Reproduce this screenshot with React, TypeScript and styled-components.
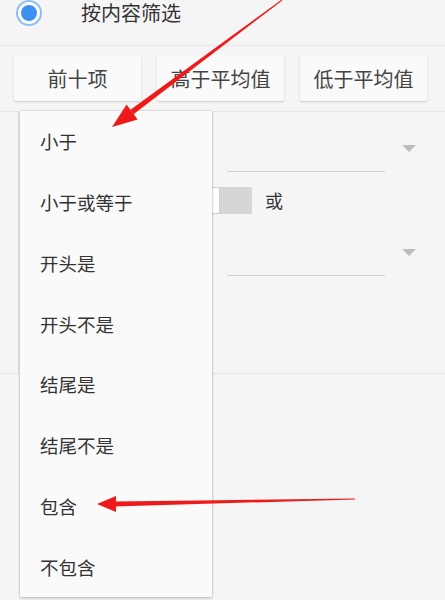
import styled, { createGlobalStyle } from 'styled-components'

const GlobalStyle = createGlobalStyle`
    html, body {
        margin: 0;
        padding: 0;
        background: #f5f5f5;
    }
    body {
        font-family: 'Noto Sans CJK SC', 'Noto Sans', sans-serif;
        color: #333;
    }
`

const menuItems = ['小于', '小于或等于', '开头是', '开头不是', '结尾是', '结尾不是', '包含', '不包含']

export default function App() {
    return (
        <Page>
            <GlobalStyle />
            <RadioRow>
                <Radio />
                <RadioLabel>按内容筛选</RadioLabel>
            </RadioRow>

            <ButtonRow>
                <QuickButton>前十项</QuickButton>
                <QuickButton>高于平均值</QuickButton>
                <QuickButton>低于平均值</QuickButton>
            </ButtonRow>

            <ConditionArea>
                <ConditionPanel>
                    <SelectRow>
                        <SelectField>
                            <Caret />
                        </SelectField>
                    </SelectRow>
                    <LogicRow>
                        <Switch>
                            <Knob />
                        </Switch>
                        <LogicLabel>或</LogicLabel>
                    </LogicRow>
                    <SelectRow>
                        <SelectField>
                            <Caret />
                        </SelectField>
                    </SelectRow>
                </ConditionPanel>

                {/* open dropdown menu, lies over the panel */}
                <Menu>
                    {menuItems.map(item => (
                        <MenuItem key={item}>{item}</MenuItem>
                    ))}
                </Menu>
            </ConditionArea>

            {/* red annotation arrows */}
            <Arrows width="445" height="600" viewBox="0 0 445 600">
                <polygon points="281.7,-0.4 282.3,0.4 133.5,114.2 130.5,109.8" fill="#ee1a1a" />
                <polygon points="112,127 126.6,104.6 137.6,119.4" fill="#ee1a1a" />
                <polygon points="355,498.6 355,499.4 114,506.5 114,501.5" fill="#ee1a1a" />
                <polygon points="97,504 116,496 116,512" fill="#ee1a1a" />
            </Arrows>
        </Page>
    )
}

/* ===========================
   styled-components
   =========================== */

const Page = styled.div`
    position: relative;
    width: 445px;
    height: 600px;
    overflow: hidden;
    background: #f5f5f5;
`

const RadioRow = styled.div`
    display: flex;
    align-items: flex-start;
    height: 45px;
    padding-left: 18px;
    border-bottom: 1px solid #e6e6e6;
    box-sizing: content-box;
`

const Radio = styled.span`
    flex: none;
    width: 16px;
    height: 16px;
    margin-top: 2px;
    border-radius: 50%;
    background: #3d8ff0;
    border: 3px solid #ffffff;
    box-shadow: 0 0 0 2px #8dbdf3;
`

const RadioLabel = styled.span`
    margin-left: 41px;
    margin-top: 3px;
    font-size: 20px;
    line-height: 20px;
    color: #333;
`

const ButtonRow = styled.div`
    display: flex;
    gap: 16px;
    padding: 9px 14px 10px;
    border-bottom: 1px solid #e6e6e6;
`

const QuickButton = styled.div`
    width: 127px;
    height: 46px;
    display: flex;
    align-items: center;
    justify-content: center;
    background: #fafafa;
    border-radius: 2px;
    box-shadow: 0 1px 2px rgba(0, 0, 0, 0.18);
    font-size: 20px;
    color: #444;
`

const ConditionArea = styled.div`
    position: relative;
    height: 487px;
`

const ConditionPanel = styled.div`
    position: relative;
    height: 261px;
    padding-left: 18px;
    border-bottom: 1px solid #e6e6e6;

    &::before {
        content: '';
        position: absolute;
        left: 18px;
        top: 0;
        bottom: 0;
        border-left: 1px solid #e2e2e2;
    }
`

const SelectRow = styled.div`
    height: 60px;
    display: flex;
    align-items: flex-end;
`

const SelectField = styled.div`
    position: relative;
    margin-left: 209px;
    width: 158px;
    height: 36px;
    border-bottom: 1px solid #cfcfcf;
`

const Caret = styled.span`
    position: absolute;
    right: -31px;
    top: 10px;
    width: 0;
    height: 0;
    border-left: 7px solid transparent;
    border-right: 7px solid transparent;
    border-top: 7px solid #bdbdbd;
`

const LogicRow = styled.div`
    height: 44px;
    display: flex;
    align-items: center;
    padding-top: 12px;
    box-sizing: border-box;
`

const Switch = styled.div`
    margin-left: 176px;
    width: 58px;
    height: 27px;
    background: #d6d6d6;
    border-radius: 2px;
    position: relative;
`

const Knob = styled.span`
    position: absolute;
    left: 0;
    top: 0;
    width: 24px;
    height: 25px;
    background: #fff;
    border: 1px solid #d0d0d0;
`

const LogicLabel = styled.span`
    margin-left: 13px;
    font-size: 18px;
    color: #333;
`

const Menu = styled.div`
    position: absolute;
    left: 20px;
    top: -1px;
    width: 192px;
    height: 486px;
    background: #fafafa;
    box-shadow: 0 0 2px rgba(0, 0, 0, 0.28), 0 2px 3px rgba(0, 0, 0, 0.12);
    display: flex;
    flex-direction: column;
`

const MenuItem = styled.div`
    height: 60.8px;
    display: flex;
    align-items: center;
    padding-left: 20px;
    font-size: 18.5px;
    color: #333;
`

const Arrows = styled.svg`
    position: absolute;
    left: 0;
    top: 0;
    pointer-events: none;
`
